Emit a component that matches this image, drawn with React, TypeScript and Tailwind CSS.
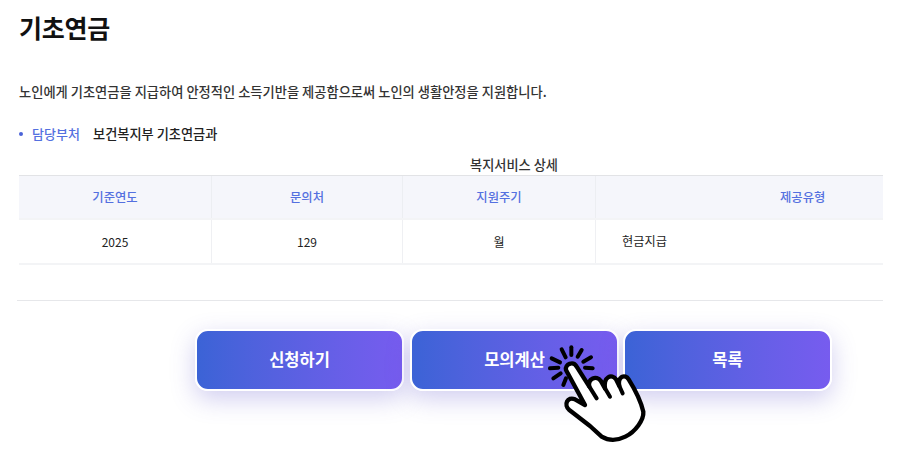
const font = { fontFamily: '"Noto Sans CJK KR", "Noto Sans", sans-serif' };

function Hand() {
  return (
    <svg viewBox="0 0 390 390" className="absolute left-[530px] top-[320px] w-[130px] h-[130px]" fill="none">
      {/* burst lines */}
      <g stroke="#000" strokeWidth="12" strokeLinecap="round">
        <path d="M124 82 L124 105" />
        <path d="M155 90 L143 110" />
        <path d="M183 112 L160 125" />
        <path d="M188 145 L165 143" />
        <path d="M95 88 L107 112" />
        <path d="M65 115 L90 127" />
        <path d="M60 145 L85 143" />
        <path d="M70 175 L92 160" />
        <path d="M100 195 L108 175" />
      </g>
      {/* hand */}
      <path
        d="M108 150 C104 132 130 122 140 140 L178 200 C172 175 200 165 212 182 L225 205 C220 170 245 160 258 178 L268 198 C262 170 285 160 296 178 C316 210 334 250 340 275 C342 300 316 335 286 350 C262 362 235 362 215 350 L180 318 L118 270 C100 255 112 228 135 238 L165 255 Z"
        fill="#fff"
        stroke="#000"
        strokeWidth="13"
        strokeLinejoin="round"
      />
      <g stroke="#000" strokeWidth="12" strokeLinecap="round">
        <path d="M178 200 L200 235" />
        <path d="M225 205 L240 230" />
        <path d="M268 198 L278 220" />
      </g>
    </svg>
  );
}

function GradientButton({ label }: { label: string }) {
  return (
    <button className="w-[209px] h-[62px] pb-[2px] rounded-[13px] border-2 border-white bg-gradient-to-r from-[#3b63d6] to-[#775cef] text-white text-[16.5px] font-bold shadow-[0_8px_24px_rgba(90,80,200,0.28)]">
      {label}
    </button>
  );
}

const headCell = "flex items-center justify-center text-[#5470e0] text-[12.3px] font-medium border-r border-[#eceef2]";
const bodyCell = "flex items-center justify-center text-[#222] text-[12px] border-r border-[#eff0f3]";

export default function App() {
  return (
    <div className="relative w-[902px] h-[460px] overflow-hidden bg-white text-[#111]" style={font}>
      <div className="pl-[19px] pr-[19px]">
        <h1 className="pt-[9px] text-[25px] leading-[36px] font-bold tracking-[-0.25px]">기초연금</h1>
        <p className="mt-[37px] text-[13.25px] leading-[20px] font-medium text-[#333]">
          노인에게 기초연금을 지급하여 안정적인 소득기반을 제공함으로써 노인의 생활안정을 지원합니다.
        </p>
        <div className="mt-[22px] flex items-center leading-[20px] font-medium">
          <span className="w-[4px] h-[4px] rounded-full bg-[#4a63d8] mr-[9px]" />
          <span className="text-[#5470e0] w-[61px] text-[13px]">담당부처</span>
          <span className="text-[#222] text-[13.2px]">보건복지부 기초연금과</span>
        </div>
        <div className="mt-[11px] h-[20px] pl-[451px] text-[13.2px] leading-[20px] font-medium text-[#333]">
          복지서비스 상세
        </div>
        <div className="border-t border-[#e2e3e6] border-b-[2px] border-b-[#f3f4f6]">
          <div className="grid grid-cols-[193px_191px_193px_287px] h-[42px] bg-[#f5f6fb]">
            <div className={headCell}>기준연도</div>
            <div className={headCell}>문의처</div>
            <div className={headCell}>지원주기</div>
            <div className="flex items-center pl-[184px] text-[#5470e0] text-[12.3px] font-medium">제공유형</div>
          </div>
          <div className="grid grid-cols-[193px_191px_193px_287px] h-[45px] border-t-2 border-[#f3f4f6]">
            <div className={bodyCell}>2025</div>
            <div className={bodyCell}>129</div>
            <div className={bodyCell}>월</div>
            <div className="flex items-center pl-[26px] text-[#222] text-[12.2px]">현금지급</div>
          </div>
        </div>
        <div className="mt-[35px] -ml-[2px] border-t border-[#e6e7ea]" />
        <div className="mt-[28px] ml-[176px] flex">
          <GradientButton label="신청하기" />
          <div className="ml-[6px]"><GradientButton label="모의계산" /></div>
          <div className="ml-[4px]"><GradientButton label="목록" /></div>
        </div>
      </div>
      <Hand />
    </div>
  );
}
